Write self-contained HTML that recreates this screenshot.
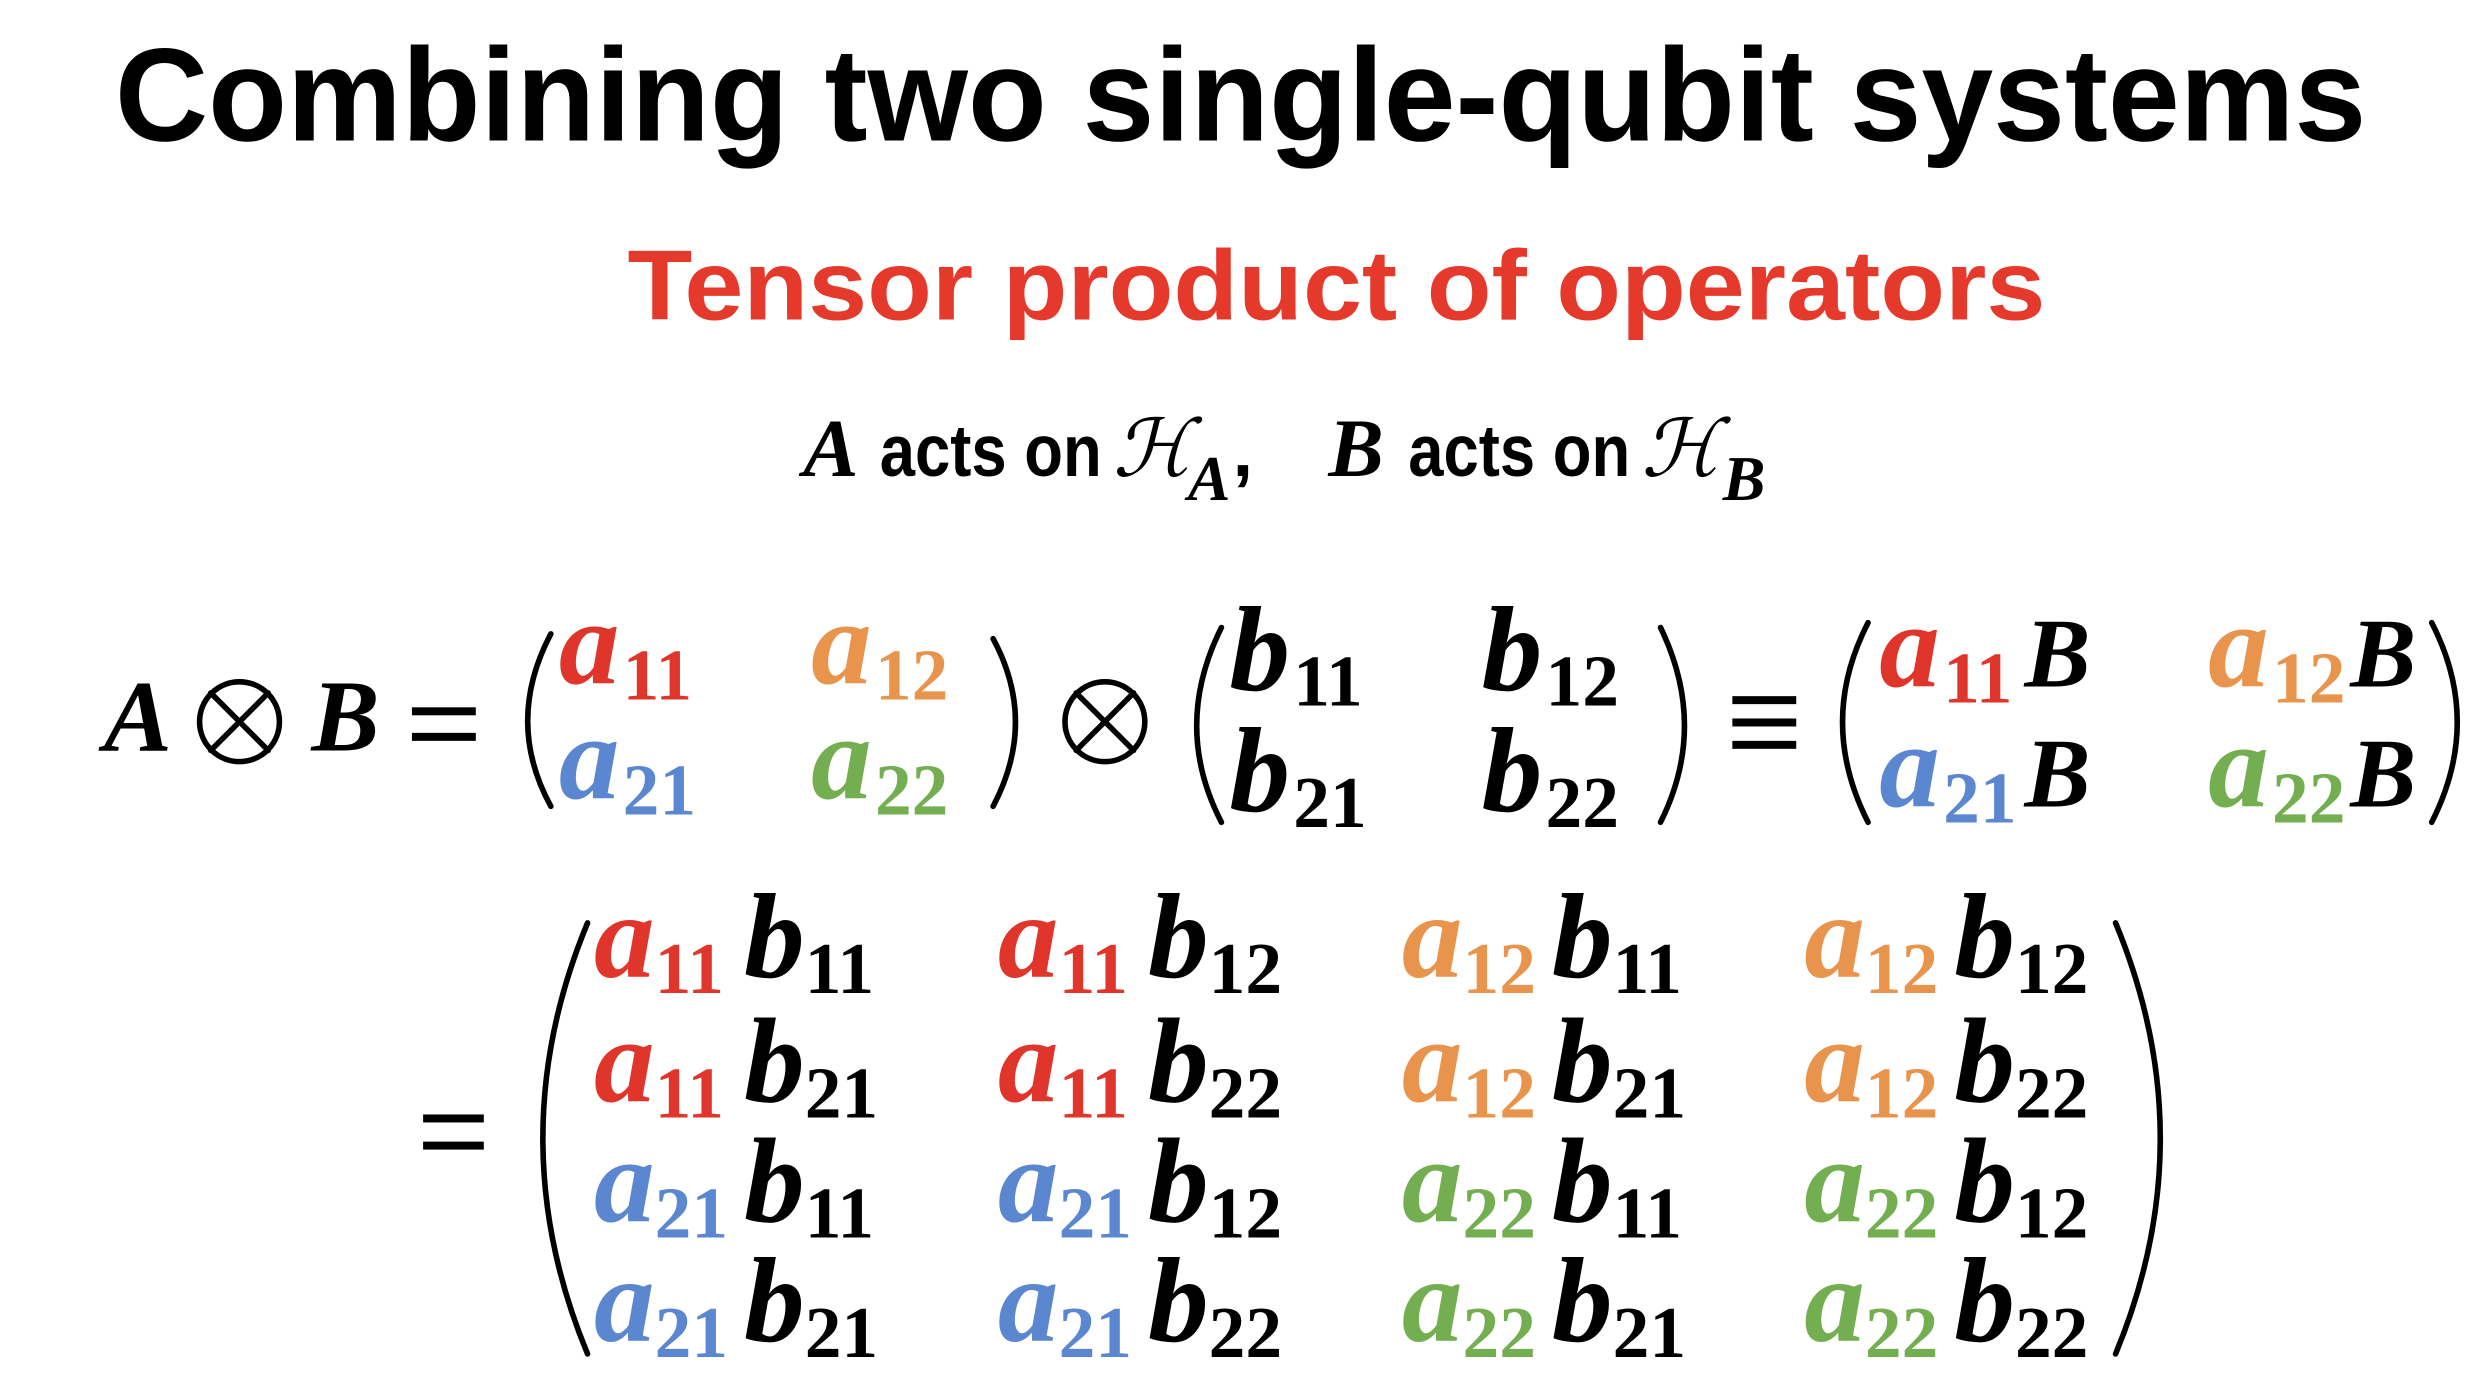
<!DOCTYPE html>
<html><head><meta charset="utf-8"><style>
html,body{margin:0;padding:0;background:#fff;width:2478px;height:1380px;overflow:hidden}
svg{display:block}
.t{font-family:"Liberation Sans",sans-serif;font-weight:bold}
.m{font-family:"Liberation Serif",serif;font-weight:bold;font-style:italic;font-size:76px}
.s{font-family:"Liberation Serif",serif;font-weight:bold;font-size:46px}
.R{fill:#e0352b}.O{fill:#e8944c}.Bl{fill:#5b87d0}.G{fill:#73ae50}
</style></head><body>
<svg width="2478" height="1380" viewBox="0 0 1552 864.3" preserveAspectRatio="none" xmlns="http://www.w3.org/2000/svg">
<text class="t" x="72" y="88" style="font-size:83px" textLength="1410" lengthAdjust="spacingAndGlyphs">Combining two single-qubit systems</text>
<text class="t" x="393" y="200" style="font-size:62px" fill="#e53a2b" textLength="888" lengthAdjust="spacingAndGlyphs">Tensor product of operators</text>

<text class="m" x="503" y="298" style="font-size:52px">A</text>
<text class="t" x="551" y="298" style="font-size:46px" textLength="139" lengthAdjust="spacingAndGlyphs">acts on</text>
<text x="697" y="298" style="font-family:'DejaVu Serif',serif;font-style:italic;font-size:50px">ℋ</text>
<text class="m" x="744" y="313" style="font-size:40px">A</text>
<text class="t" x="772" y="298" style="font-size:46px">,</text>
<text class="m" x="832" y="298" style="font-size:52px">B</text>
<text class="t" x="882" y="298" style="font-size:46px" textLength="139" lengthAdjust="spacingAndGlyphs">acts on</text>
<text x="1028" y="298" style="font-family:'DejaVu Serif',serif;font-style:italic;font-size:50px">ℋ</text>
<text class="m" x="1079" y="313" style="font-size:40px">B</text>

<g fill="none" stroke="#000" stroke-width="3.5" stroke-linecap="round">
<circle cx="150" cy="452" r="25"/><path d="M132,434L168,470M168,434L132,470"/>
<circle cx="692" cy="452" r="25"/><path d="M674,434L710,470M710,434L674,470"/>
<path d="M345,397Q316,452 345,505"/><path d="M622,400Q650,452 622,505"/>
<path d="M765,393Q734,455 765,515"/><path d="M1040,393Q1070,455 1040,515"/>
<path d="M1170,390Q1138,452 1170,515"/><path d="M1523,390Q1555,452 1523,515"/>
<path d="M368,578Q312,713 368,848"/><path d="M1325,578Q1381,713 1325,848"/>
</g>
<g fill="#000">
<rect x="258" y="443" width="40" height="5"/><rect x="258" y="459" width="40" height="5"/>
<rect x="1085" y="436" width="40" height="5"/><rect x="1085" y="450" width="40" height="5"/><rect x="1085" y="464" width="40" height="5"/>
<rect x="265" y="698" width="38" height="5"/><rect x="265" y="715" width="38" height="5"/>
</g>
<text class="m" x="65" y="470" style="font-size:64px">A</text>
<text class="m" x="195" y="470" style="font-size:64px">B</text>
<text class="m R" x="350" y="428">a</text><text class="s R" x="390" y="438">11</text>
<text class="m O" x="508" y="428">a</text><text class="s O" x="548" y="438">12</text>
<text class="m Bl" x="350" y="500">a</text><text class="s Bl" x="390" y="510">21</text>
<text class="m G" x="508" y="500">a</text><text class="s G" x="548" y="510">22</text>
<text class="m" x="770" y="432">b</text><text class="s" x="810" y="442">11</text>
<text class="m" x="928" y="432">b</text><text class="s" x="968" y="442">12</text>
<text class="m" x="770" y="508">b</text><text class="s" x="810" y="518">21</text>
<text class="m" x="928" y="508">b</text><text class="s" x="968" y="518">22</text>
<text class="m R" x="1177" y="430">a</text><text class="s R" x="1217" y="440">11</text><text class="m" x="1268" y="430" style="font-size:62px">B</text>
<text class="m O" x="1383" y="430">a</text><text class="s O" x="1423" y="440">12</text><text class="m" x="1472" y="430" style="font-size:62px">B</text>
<text class="m Bl" x="1177" y="505">a</text><text class="s Bl" x="1217" y="515">21</text><text class="m" x="1268" y="505" style="font-size:62px">B</text>
<text class="m G" x="1383" y="505">a</text><text class="s G" x="1423" y="515">22</text><text class="m" x="1472" y="505" style="font-size:62px">B</text>

<text class="m R" x="372" y="612">a</text><text class="s R" x="410" y="622">11</text><text class="m" x="466" y="612">b</text><text class="s" x="504" y="622">11</text>
<text class="m R" x="625" y="612">a</text><text class="s R" x="663" y="622">11</text><text class="m" x="719" y="612">b</text><text class="s" x="757" y="622">12</text>
<text class="m O" x="878" y="612">a</text><text class="s O" x="916" y="622">12</text><text class="m" x="972" y="612">b</text><text class="s" x="1010" y="622">11</text>
<text class="m O" x="1130" y="612">a</text><text class="s O" x="1168" y="622">12</text><text class="m" x="1224" y="612">b</text><text class="s" x="1262" y="622">12</text>

<text class="m R" x="372" y="690">a</text><text class="s R" x="410" y="700">11</text><text class="m" x="466" y="690">b</text><text class="s" x="504" y="700">21</text>
<text class="m R" x="625" y="690">a</text><text class="s R" x="663" y="700">11</text><text class="m" x="719" y="690">b</text><text class="s" x="757" y="700">22</text>
<text class="m O" x="878" y="690">a</text><text class="s O" x="916" y="700">12</text><text class="m" x="972" y="690">b</text><text class="s" x="1010" y="700">21</text>
<text class="m O" x="1130" y="690">a</text><text class="s O" x="1168" y="700">12</text><text class="m" x="1224" y="690">b</text><text class="s" x="1262" y="700">22</text>

<text class="m Bl" x="372" y="765">a</text><text class="s Bl" x="410" y="775">21</text><text class="m" x="466" y="765">b</text><text class="s" x="504" y="775">11</text>
<text class="m Bl" x="625" y="765">a</text><text class="s Bl" x="663" y="775">21</text><text class="m" x="719" y="765">b</text><text class="s" x="757" y="775">12</text>
<text class="m G" x="878" y="765">a</text><text class="s G" x="916" y="775">22</text><text class="m" x="972" y="765">b</text><text class="s" x="1010" y="775">11</text>
<text class="m G" x="1130" y="765">a</text><text class="s G" x="1168" y="775">22</text><text class="m" x="1224" y="765">b</text><text class="s" x="1262" y="775">12</text>

<text class="m Bl" x="372" y="840">a</text><text class="s Bl" x="410" y="850">21</text><text class="m" x="466" y="840">b</text><text class="s" x="504" y="850">21</text>
<text class="m Bl" x="625" y="840">a</text><text class="s Bl" x="663" y="850">21</text><text class="m" x="719" y="840">b</text><text class="s" x="757" y="850">22</text>
<text class="m G" x="878" y="840">a</text><text class="s G" x="916" y="850">22</text><text class="m" x="972" y="840">b</text><text class="s" x="1010" y="850">21</text>
<text class="m G" x="1130" y="840">a</text><text class="s G" x="1168" y="850">22</text><text class="m" x="1224" y="840">b</text><text class="s" x="1262" y="850">22</text>
</svg>
</body></html>
